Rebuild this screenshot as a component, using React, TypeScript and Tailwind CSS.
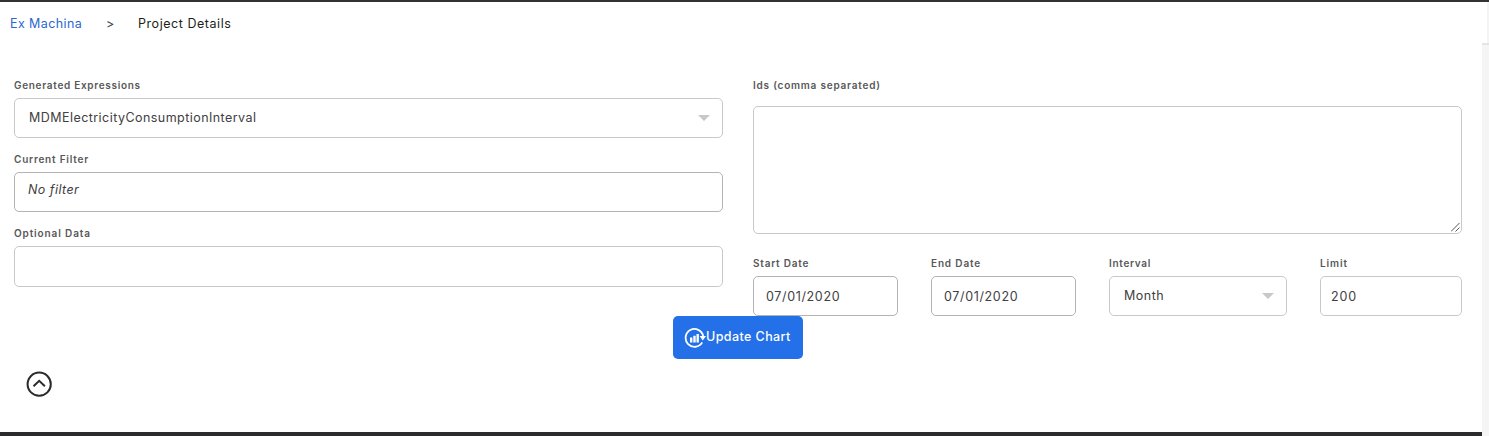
import type { ReactNode } from "react";

function Label({ children, tracking = "tracking-[0.7px]" }: { children: ReactNode; tracking?: string }) {
  return (
    <span className={`block h-[13px] whitespace-nowrap text-[10px] leading-[13px] font-semibold text-[#58585a] ${tracking}`}>
      {children}
    </span>
  );
}

function Caret() {
  return (
    <svg width="12" height="6" viewBox="0 0 12 6" className="shrink-0" aria-hidden="true">
      <path d="M0 0h12L6 6z" fill="#c8c8c8" />
    </svg>
  );
}

function ChartRefreshIcon() {
  return (
    <svg width="22" height="20" viewBox="0 0 22 20" fill="none" className="shrink-0" aria-hidden="true">
      <path d="M18.2 14.4A8.9 8.9 0 1 1 19.2 8" stroke="white" strokeWidth="1.8" />
      <path d="M15.6 8h6.4l-3.2 4.6z" fill="white" />
      <path d="M7.2 9.6v4.8M10.5 7.8v6.6M13.7 6v8.4" stroke="white" strokeWidth="2.4" />
    </svg>
  );
}

export default function App() {
  return (
    <div className="flex h-[436px] w-[1489px] flex-col overflow-hidden border-t-2 border-[#333132] bg-white font-['Inter','Open_Sans',sans-serif] text-[12.5px] text-[#414042]">
      <nav className="flex h-[41px] shrink-0 items-center border-r-2 border-[#f4f4f4] pt-[3px] pl-[10px]">
        <a className="w-[96px] tracking-[0.4px] text-[#2a67d0]">Ex Machina</a>
        <span className="w-[32px]">&gt;</span>
        <span className="tracking-[0.55px] text-[#1e1e20]">Project Details</span>
      </nav>
      <div className="flex min-h-0 flex-1">
        <main className="flex w-[1482px] flex-col border-b-4 border-[#2b2a2d]">
          <div className="grid h-[273px] grid-cols-2 gap-[30px] pt-[36px] pr-5 pl-[14px]">
            <section>
              <Label>Generated Expressions</Label>
              <div className="mt-[6px] flex h-10 items-center justify-between rounded-[5px] border border-[#c9c9c9] pr-3 pl-[14px]">
                <span className="tracking-[0.45px]">MDMElectricityConsumptionInterval</span>
                <Caret />
              </div>
              <div className="mt-[15px]">
                <Label tracking="tracking-[0.78px]">Current Filter</Label>
                <div className="mt-[6px] h-10 rounded-[5px] border border-[#b3b3b3] px-[13px] pt-[7px] leading-5 tracking-[0.45px] italic">
                  No filter
                </div>
              </div>
              <div className="mt-[15px]">
                <Label tracking="tracking-[0.88px]">Optional Data</Label>
                <div className="mt-[6px] h-[41px] rounded-[5px] border border-[#c9c9c9]" />
              </div>
            </section>
            <section>
              <Label tracking="tracking-[0.78px]">Ids (comma separated)</Label>
              <div className="mt-[14px] flex h-32 items-end justify-end rounded-[5px] border border-[#c9c9c9] p-px">
                <svg width="9" height="9" viewBox="0 0 9 9" stroke="#555" aria-hidden="true">
                  <path d="M0 8.5L8.5 0M4.5 8.5l4-4" />
                </svg>
              </div>
              <div className="mt-[23px] grid grid-cols-[145px_145px_178px_142px] gap-[33px]">
                <div>
                  <Label tracking="tracking-[0.78px]">Start Date</Label>
                  <div className="mt-[6px] flex h-10 items-center rounded-[5px] border border-[#b3b3b3] px-3 pt-[3px] tracking-[0.65px]">07/01/2020</div>
                </div>
                <div>
                  <Label tracking="tracking-[0.85px]">End Date</Label>
                  <div className="mt-[6px] flex h-10 items-center rounded-[5px] border border-[#b3b3b3] px-3 pt-[3px] tracking-[0.65px]">07/01/2020</div>
                </div>
                <div>
                  <Label>Interval</Label>
                  <div className="mt-[6px] flex h-10 items-center justify-between rounded-[5px] border border-[#c9c9c9] pr-3 pl-[14px] tracking-[0.5px]">
                    <span>Month</span>
                    <Caret />
                  </div>
                </div>
                <div>
                  <Label tracking="tracking-[0.9px]">Limit</Label>
                  <div className="mt-[6px] flex h-10 items-center rounded-[5px] border border-[#c9c9c9] px-[10px] pt-[3px] tracking-[0.9px]">200</div>
                </div>
              </div>
            </section>
          </div>
          <button className="ml-[673px] flex h-[43px] w-[130px] shrink-0 items-center rounded-[5px] bg-[#2370e8] pl-[11px] font-medium text-white">
            <ChartRefreshIcon />
            <span className="pb-px tracking-[0.42px] whitespace-nowrap">Update Chart</span>
          </button>
          <svg width="28" height="28" viewBox="0 0 28 28" fill="none" stroke="#2b2a2d" className="mt-[11px] ml-[25px]" aria-label="Collapse">
            <circle cx="14.2" cy="14.2" r="11.6" strokeWidth="2" />
            <path d="M8.5 16.3L14.2 10.8l5.7 5.5" strokeWidth="2" />
          </svg>
        </main>
        <aside className="w-[7px] border-t-2 border-[#e5e5e5] bg-[#f5f5f5]" />
      </div>
    </div>
  );
}
